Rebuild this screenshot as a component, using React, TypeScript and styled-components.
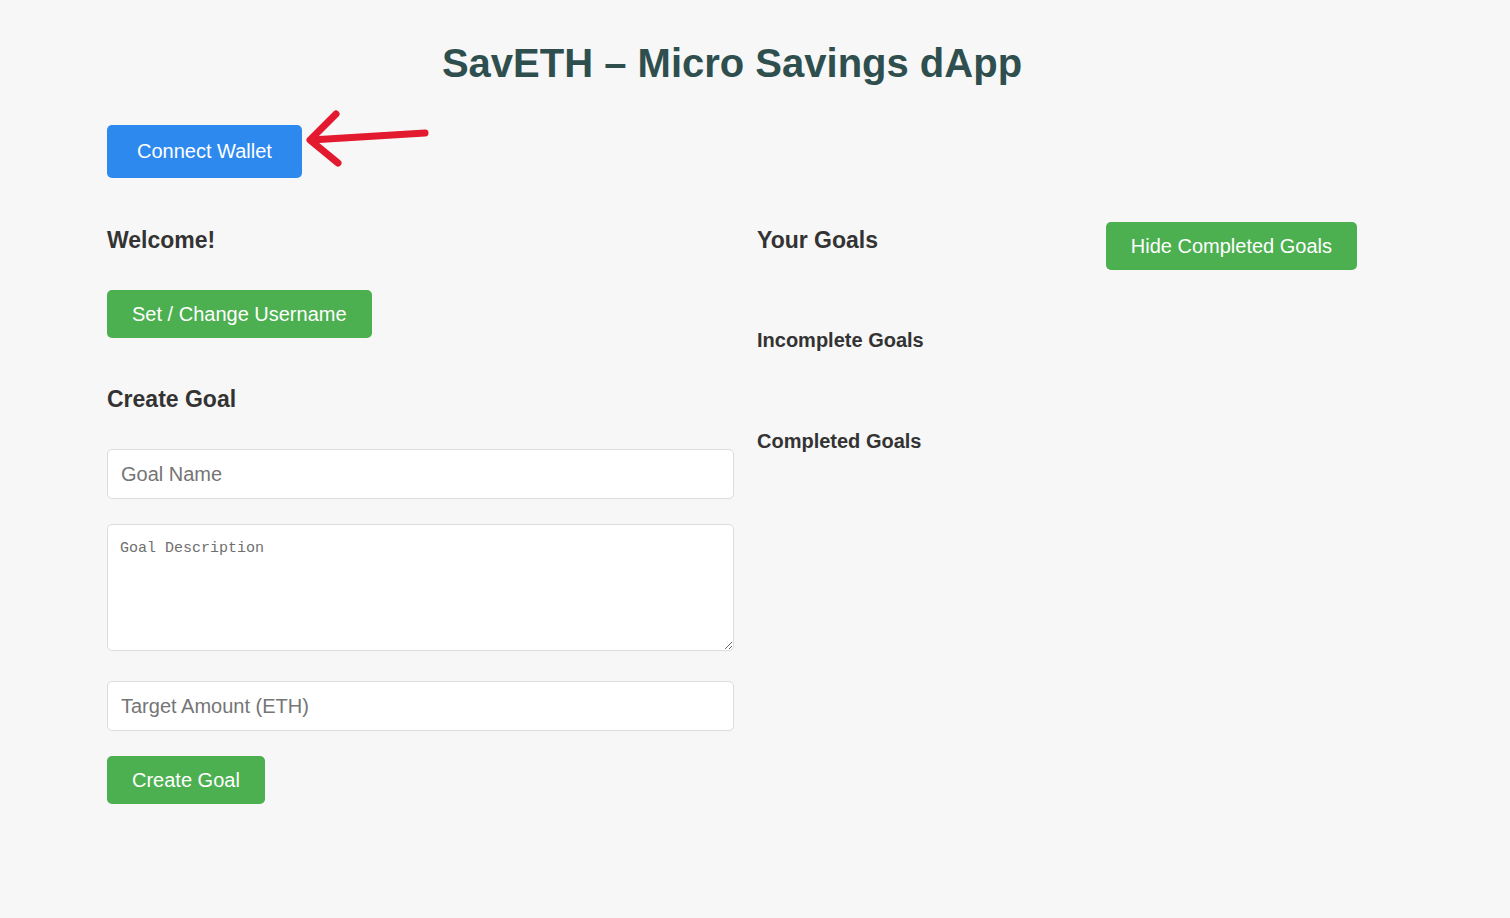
import React from "react";
import styled, { createGlobalStyle } from "styled-components";

const Global = createGlobalStyle`
  html, body { margin: 0; padding: 0; background: #f7f7f7; }
  body { font-family: "Liberation Sans", Arial, sans-serif; color: #333; }
  * { box-sizing: border-box; }
`;

const Page = styled.div`
  width: 1357px;
  padding: 40px 0 60px 107px;
`;

const Title = styled.h1`
  margin: 0;
  text-align: center;
  font-size: 40px;
  line-height: 46px;
  font-weight: 700;
  color: #2f4f4f;
`;

const WalletRow = styled.div`
  position: relative;
  margin-top: 39px;
  height: 53px;
`;

const Button = styled.button<{ $variant?: "blue" | "green"; $big?: boolean }>`
  display: inline-block;
  border: none;
  border-radius: 5px;
  font-family: "Liberation Sans", Arial, sans-serif;
  font-size: 20px;
  line-height: 23px;
  color: #fff;
  cursor: pointer;
  background: ${(p) => (p.$variant === "blue" ? "#2e89ef" : "#4caf50")};
  padding: ${(p) => (p.$big ? "15px 30px" : "12.5px 25px")};
`;

const Arrow = styled.svg`
  position: absolute;
  left: 193px;
  top: -15px;
`;

const Columns = styled.div`
  display: grid;
  grid-template-columns: 627px 600px;
  column-gap: 23px;
  margin-top: 47px;
`;

const Column = styled.div`
  display: flex;
  flex-direction: column;
  align-items: flex-start;
`;

const Heading = styled.h2<{ $mt?: number }>`
  margin: ${(p) => p.$mt ?? 0}px 0 0 0;
  font-size: 23px;
  line-height: 26px;
  font-weight: 700;
  color: #333;
`;

const SubHeading = styled.h3<{ $mt?: number }>`
  margin: ${(p) => p.$mt ?? 0}px 0 0 0;
  font-size: 20px;
  line-height: 23px;
  font-weight: 700;
  color: #333;
`;

const Field = styled.input<{ $mt: number }>`
  width: 100%;
  height: 50px;
  margin-top: ${(p) => p.$mt}px;
  padding: 0 13px;
  border: 1px solid #dcdcdc;
  border-radius: 5px;
  background: #fff;
  font-family: "Liberation Sans", Arial, sans-serif;
  font-size: 20px;
  color: #333;
  outline: none;
  &::placeholder { color: #757575; }
`;

const Area = styled.textarea`
  display: block;
  width: 100%;
  height: 127px;
  margin-top: 25px;
  padding: 15px 12px 13px;
  border: 1px solid #dcdcdc;
  border-radius: 5px;
  background: #fff;
  font-family: "Liberation Mono", "DejaVu Sans Mono", monospace;
  font-size: 15px;
  outline: none;
  resize: vertical;
  &::placeholder { color: #6f6f6f; }
`;

const ButtonSpacer = styled.div<{ $mt: number }>`
  margin-top: ${(p) => p.$mt}px;
`;

const GoalsHeader = styled.div`
  display: flex;
  justify-content: space-between;
  align-items: flex-start;
  width: 100%;
  margin-top: -3px;
`;

const HeaderTitle = styled(Heading)`
  margin-top: 5px;
`;

export default function App() {
  return (
    <>
      <Global />
      <Page>
        <Title>SavETH – Micro Savings dApp</Title>
        <WalletRow>
          <Button $variant="blue" $big>Connect Wallet</Button>
          <Arrow width="140" height="80" viewBox="0 0 140 80">
            <g stroke="#e3192f" strokeWidth="7" strokeLinecap="round" strokeLinejoin="round" fill="none">
              <path d="M125 23 L11 30" />
              <path d="M36 4 L10 30 L38 53" />
            </g>
          </Arrow>
        </WalletRow>
        <Columns>
          <Column>
            <Heading $mt={2}>Welcome!</Heading>
            <ButtonSpacer $mt={37}>
              <Button>Set / Change Username</Button>
            </ButtonSpacer>
            <Heading $mt={48}>Create Goal</Heading>
            <Field $mt={37} placeholder="Goal Name" />
            <Area placeholder="Goal Description" />
            <Field $mt={30} placeholder="Target Amount (ETH)" />
            <ButtonSpacer $mt={25}>
              <Button>Create Goal</Button>
            </ButtonSpacer>
          </Column>
          <Column>
            <GoalsHeader>
              <HeaderTitle>Your Goals</HeaderTitle>
              <Button>Hide Completed Goals</Button>
            </GoalsHeader>
            <SubHeading $mt={59}>Incomplete Goals</SubHeading>
            <SubHeading $mt={78}>Completed Goals</SubHeading>
          </Column>
        </Columns>
      </Page>
    </>
  );
}
